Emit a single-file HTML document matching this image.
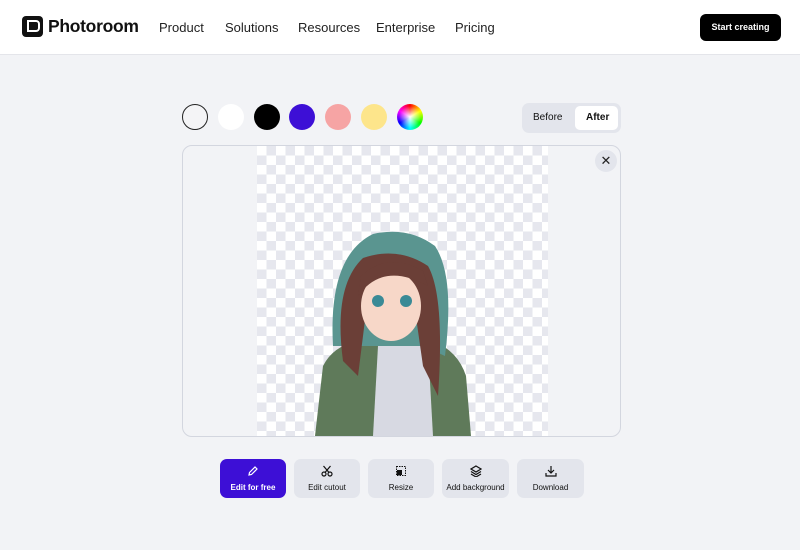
<!DOCTYPE html><html><head><style>
body{margin:0;width:800px;height:550px;background:#f2f3f6;font-family:"Liberation Sans",sans-serif;overflow:hidden;position:relative}
.nav{position:absolute;left:0;top:0;width:800px;height:54px;background:#fff;border-bottom:1px solid #e4e5ea}
.logo{position:absolute;left:22px;top:16px;width:21px;height:21px;background:#111;border-radius:4px}
.brand{position:absolute;left:48px;top:16px;font-size:17.5px;font-weight:bold;color:#111;letter-spacing:-0.3px}
.menu{position:absolute;top:20px;font-size:13px;color:#222}
.cta{position:absolute;left:700px;top:14px;width:81px;height:27px;background:#000;border-radius:6px;color:#fff;font-size:9px;font-weight:bold;text-align:center;line-height:27px}
.sw{position:absolute;top:104px;width:26px;height:26px;border-radius:50%}
.tog{position:absolute;left:522px;top:103px;width:99px;height:30px;background:#e3e5ec;border-radius:7px}
.tog span{position:absolute;top:9px;font-size:10px;color:#111}
.after{position:absolute;left:53px;top:3px;width:43px;height:24px;background:#fff;border-radius:5px}
.card{position:absolute;left:182px;top:145px;width:437px;height:290px;border:1px solid #d3d6df;border-radius:10px;overflow:hidden;background:#f2f3f6}
.chk{position:absolute;left:74px;top:0;width:291px;height:291px;background-color:#fff;background-image:linear-gradient(45deg,#e6e7ee 25%,transparent 25%,transparent 75%,#e6e7ee 75%),linear-gradient(45deg,#e6e7ee 25%,transparent 25%,transparent 75%,#e6e7ee 75%);background-size:19px 19px;background-position:0 0,9.5px 9.5px}
.x{position:absolute;left:412px;top:4px;width:22px;height:22px;border-radius:50%;background:#e3e5ec;text-align:center;line-height:22px;font-size:13px;color:#222}
.btn{position:absolute;top:459px;height:39px;border-radius:7px;background:#e3e5ec;font-size:8px;color:#111;text-align:center}
.btn .t{position:absolute;left:0;right:0;top:24px}
.btn svg{position:absolute;left:50%;top:6px;margin-left:-6px}
</style></head><body>
<div class="nav">
<div class="logo"><div style="position:absolute;left:5px;top:4px;width:9px;height:8px;border:2px solid #fff;border-radius:0 4px 4px 0;border-left-width:2px"></div></div>
<div class="brand">Photoroom</div>
<div class="menu" style="left:159px">Product</div>
<div class="menu" style="left:225px">Solutions</div>
<div class="menu" style="left:298px">Resources</div>
<div class="menu" style="left:376px">Enterprise</div>
<div class="menu" style="left:455px">Pricing</div>
<div class="cta">Start creating</div>
</div>
<div class="sw" style="left:182px;background:#f4f4f6;border:1.5px solid #222;width:24px;height:24px"></div>
<div class="sw" style="left:218px;background:#fff"></div>
<div class="sw" style="left:254px;background:#000"></div>
<div class="sw" style="left:289px;background:#3d0fd6"></div>
<div class="sw" style="left:325px;background:#f6a4a4"></div>
<div class="sw" style="left:361px;background:#fde58b"></div>
<div class="sw" style="left:397px;background:radial-gradient(circle,#fff 0%,rgba(255,255,255,0) 60%),conic-gradient(red,yellow,lime,cyan,blue,magenta,red)"></div>
<div class="tog"><span style="left:11px">Before</span><div class="after"></div><span style="left:64px;font-weight:bold">After</span></div>
<div class="card"><div class="chk"></div>
<svg style="position:absolute;left:0;top:0" width="437" height="290">
<path d="M132 290 L140 220 Q150 200 175 195 L250 195 Q275 205 283 230 L288 290Z" fill="#5f7a5a"/>
<path d="M195 200 L245 200 L250 290 L190 290Z" fill="#d7d9e2"/>
<path d="M150 200 Q145 110 190 88 Q225 80 252 100 Q272 130 262 210 L240 200 L180 200Z" fill="#5a9590"/>
<path d="M160 215 Q150 140 180 112 Q215 100 245 120 Q262 150 255 250 L240 220 L230 150 L185 150 L175 230Z" fill="#6b3f37"/>
<ellipse cx="208" cy="160" rx="30" ry="35" fill="#f7d7c8"/>
<path d="M175 150 Q200 115 245 140 L240 125 Q205 105 178 130Z" fill="#6b3f37"/>
<circle cx="195" cy="155" r="6" fill="#3a8a96"/><circle cx="223" cy="155" r="6" fill="#3a8a96"/>
</svg>
<div class="x">✕</div></div>
<div class="btn" style="left:220px;width:66px;background:#3d0fd6;color:#fff"><svg width="12" height="12" viewBox="0 0 12 12"><path d="M2 10 L2.5 7.5 L8 2 L10 4 L4.5 9.5Z" fill="none" stroke="#fff" stroke-width="1.2"/></svg><div class="t" style="font-weight:bold">Edit for free</div></div>
<div class="btn" style="left:294px;width:66px"><svg width="12" height="12" viewBox="0 0 12 12"><circle cx="3" cy="9" r="2" fill="none" stroke="#111" stroke-width="1.2"/><circle cx="9" cy="9" r="2" fill="none" stroke="#111" stroke-width="1.2"/><path d="M4 7.5L9.5 1M8 7.5L2.5 1" stroke="#111" stroke-width="1.2"/></svg><div class="t">Edit cutout</div></div>
<div class="btn" style="left:368px;width:66px"><svg width="12" height="12" viewBox="0 0 12 12"><rect x="1.5" y="1.5" width="9" height="9" fill="none" stroke="#111" stroke-dasharray="1.5 1"/><rect x="2" y="5" width="5" height="5" fill="#111"/></svg><div class="t">Resize</div></div>
<div class="btn" style="left:442px;width:67px"><svg width="12" height="12" viewBox="0 0 12 12"><path d="M6 1L11 4L6 7L1 4Z M1 6.5L6 9.5L11 6.5 M1 9L6 12L11 9" fill="none" stroke="#111" stroke-width="1.2"/></svg><div class="t">Add background</div></div>
<div class="btn" style="left:517px;width:67px"><svg width="12" height="12" viewBox="0 0 12 12"><path d="M6 1V8M3 5L6 8L9 5M1 8V11H11V8" fill="none" stroke="#111" stroke-width="1.2"/></svg><div class="t">Download</div></div>
</body></html>
